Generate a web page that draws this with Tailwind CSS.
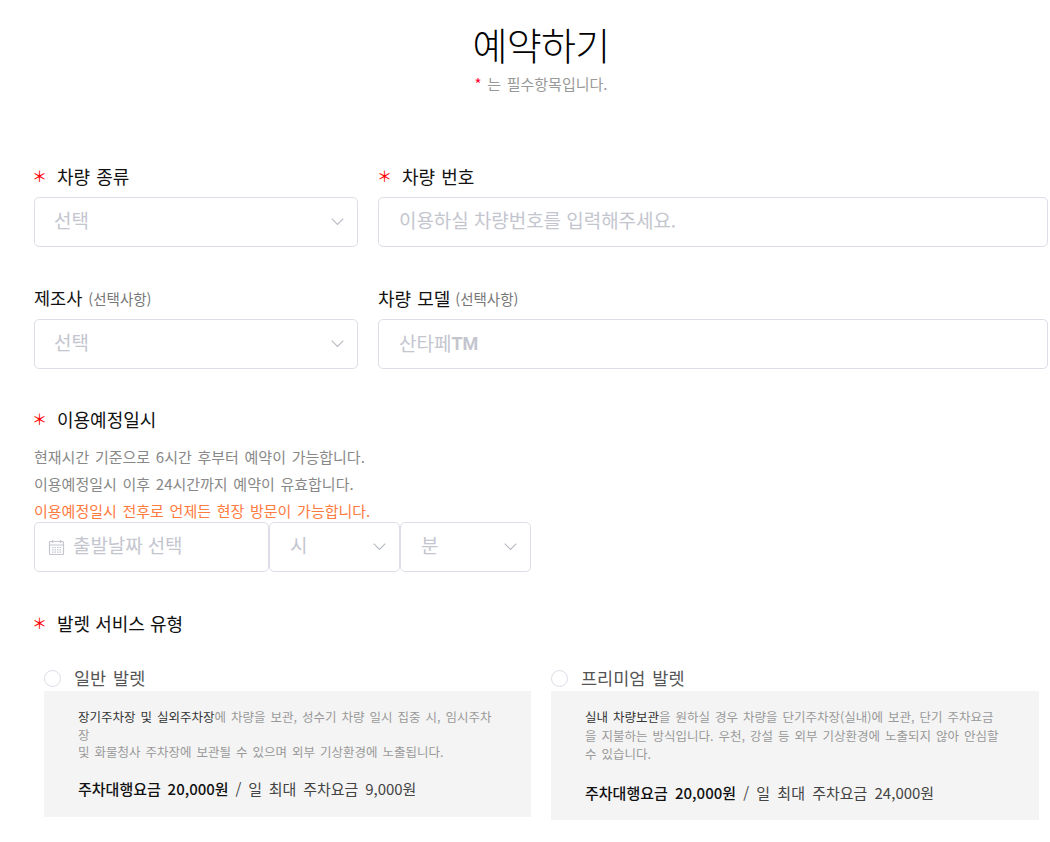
<!DOCTYPE html>
<html lang="ko">
<head>
<meta charset="UTF-8">
<title>예약하기</title>
<script src="https://cdn.jsdelivr.net/npm/@tailwindcss/browser@4"></script>
</head>
<body class="bg-white font-['Noto_Sans_CJK_KR','Noto_Sans',sans-serif] h-[842px] overflow-hidden">
<div class="pl-[34px] pr-[2px]">
  <!-- 제목 -->
  <div class="h-[156px] pt-[19px] text-center">
    <h1 class="text-[38px] leading-[50px] text-black font-light tracking-[-0.7px]">예약하기</h1>
    <p class="mt-[5px] text-[15px] leading-[20px] text-[#999] [word-spacing:1.5px]"><span class="text-[#ff0033]">*</span> 는 필수항목입니다.</p>
  </div>

  <div class="grid grid-cols-[324px_670px] gap-x-[20px]">
    <div>
      <label class="flex items-center h-[41px] text-[18px] text-[#111] [word-spacing:1px]"><span class="text-[#f00] text-[15px] -ml-[2px] w-[25px]">＊</span>차량 종류</label>
      <div class="flex items-center justify-between h-[50px] border border-[#dcdde6] rounded-[5px] pl-[19px] pr-[13px] pb-[4px] text-[19px] text-[#c4c6cf]">선택
        <svg class="w-[13px] h-[8px] mt-[4px]" viewBox="0 0 13 8" fill="none" stroke="#b8bac3" stroke-width="1.1"><path d="M.7.7l5.8 5.8L12.3.7"/></svg>
      </div>
    </div>
    <div>
      <label class="flex items-center h-[41px] text-[18px] text-[#111] [word-spacing:1px]"><span class="text-[#f00] text-[15px] -ml-[1px] w-[25px]">＊</span>차량 번호</label>
      <div class="flex items-center h-[50px] border border-[#dcdde6] rounded-[5px] pl-[20px] pb-[3px] text-[19px] text-[#c4c6cf] tracking-[-0.06px]">이용하실 차량번호를 입력해주세요.</div>
    </div>

    <div class="mt-[31px]">
      <label class="flex items-center h-[41px] text-[17.5px] text-[#111]">제조사<span class="ml-[6px] text-[14.5px] text-[#777]">(선택사항)</span></label>
      <div class="flex items-center justify-between h-[50px] border border-[#dcdde6] rounded-[5px] pl-[19px] pr-[13px] pb-[4px] text-[19px] text-[#c4c6cf]">선택
        <svg class="w-[13px] h-[8px] mt-[4px]" viewBox="0 0 13 8" fill="none" stroke="#b8bac3" stroke-width="1.1"><path d="M.7.7l5.8 5.8L12.3.7"/></svg>
      </div>
    </div>
    <div class="mt-[31px]">
      <label class="flex items-center h-[41px] text-[18px] text-[#111] [word-spacing:1px]">차량 모델<span class="ml-[5px] text-[14.5px] text-[#777]">(선택사항)</span></label>
      <div class="flex items-center h-[50px] border border-[#dcdde6] rounded-[5px] pl-[20px] pb-[1px] text-[19px] text-[#c4c6cf]">산타페<span class="font-['Roboto'] font-bold text-[18px]">TM</span></div>
    </div>
  </div>

  <!-- 이용예정일시 -->
  <div class="mt-[35px] flex items-center h-[30px] text-[18px] text-[#111]"><span class="text-[#f00] text-[15px] -ml-[2px] w-[25px]">＊</span>이용예정일시</div>
  <div class="mt-[9px] text-[15px] leading-[27px] text-[#888] [word-spacing:1.5px]">
    <p>현재시간 기준으로 6시간 후부터 예약이 가능합니다.</p>
    <p>이용예정일시 이후 24시간까지 예약이 유효합니다.</p>
    <p class="text-[#ff7a3d]">이용예정일시 전후로 언제든 현장 방문이 가능합니다.</p>
  </div>
  <div class="flex h-[50px] -mt-[2px] text-[19px] text-[#c4c6cf]">
    <div class="flex items-center w-[235px] border border-[#dcdde6] rounded-[5px] pl-[13px] pb-[3px] tracking-[-0.1px]">
      <svg class="w-[17px] h-[17px] mr-[8px] mt-[3px]" viewBox="0 0 17 17" fill="none" stroke="#c4c6cf" stroke-width="1.2">
        <rect x="1.5" y="2.5" width="14" height="13" rx="1"/>
        <path d="M1.5 6h14M4.5 1v3M12.5 1v3"/>
        <path d="M4 8.5h9M4 10.8h9M4 13.1h9" stroke-dasharray="1.5 1"/>
      </svg>
      출발날짜 선택
    </div>
    <div class="flex items-center justify-between w-[131px] border border-[#dcdde6] rounded-[5px] pl-[20px] pr-[13px] pb-[3px]">시
      <svg class="w-[13px] h-[8px] mt-[3px]" viewBox="0 0 13 8" fill="none" stroke="#b8bac3" stroke-width="1.1"><path d="M.7.7l5.8 5.8L12.3.7"/></svg>
    </div>
    <div class="flex items-center justify-between w-[131px] border border-[#dcdde6] rounded-[5px] pl-[20px] pr-[13px] pb-[3px]">분
      <svg class="w-[13px] h-[8px] mt-[3px]" viewBox="0 0 13 8" fill="none" stroke="#b8bac3" stroke-width="1.1"><path d="M.7.7l5.8 5.8L12.3.7"/></svg>
    </div>
  </div>

  <!-- 발렛 서비스 유형 -->
  <div class="mt-[36px] flex items-center h-[30px] text-[18px] text-[#111]"><span class="text-[#f00] text-[15px] -ml-[2px] w-[25px]">＊</span>발렛 서비스 유형</div>
  <div class="mt-[28px] ml-[10px] grid grid-cols-[487px_488px] gap-x-[20px] items-start">
    <div>
      <div class="flex items-center h-[25px]">
        <span class="w-[17px] h-[17px] rounded-full border border-[#dcdde6]"></span>
        <span class="ml-[13px] text-[17.5px] text-[#555] [word-spacing:2px]">일반 발렛</span>
      </div>
      <div class="h-[126px] bg-[#f4f4f4] pl-[34px] pr-[36px] pt-[17px]">
        <p class="text-[12.5px] leading-[17.5px] text-[#999] [word-spacing:1.5px] break-all"><span class="text-[#333]">장기주차장 및 실외주차장</span>에 차량을 보관, 성수기 차량 일시 집중 시, 임시주차장<br>및 화물청사 주차장에 보관될 수 있으며 외부 기상환경에 노출됩니다.</p>
        <p class="mt-[18px] text-[15px] leading-[20px] text-[#444] [word-spacing:2.6px]"><span class="text-[#111] font-medium">주차대행요금 20,000원</span> / 일 최대 주차요금 9,000원</p>
      </div>
    </div>
    <div>
      <div class="flex items-center h-[25px]">
        <span class="w-[17px] h-[17px] rounded-full border border-[#dcdde6]"></span>
        <span class="ml-[13px] text-[17.5px] text-[#555] [word-spacing:2px]">프리미엄 발렛</span>
      </div>
      <div class="h-[129px] bg-[#f4f4f4] pl-[34px] pr-[36px] pt-[17px]">
        <p class="text-[12.5px] leading-[18.5px] text-[#999] [word-spacing:1.5px] break-all"><span class="text-[#333]">실내 차량보관</span>을 원하실 경우 차량을 단기주차장(실내)에 보관, 단기 주차요금을 지불하는 방식입니다. 우천, 강설 등 외부 기상환경에 노출되지 않아 안심할 수 있습니다.</p>
        <p class="mt-[19px] text-[15px] leading-[20px] text-[#444] [word-spacing:3px]"><span class="text-[#111] font-medium">주차대행요금 20,000원</span> / 일 최대 주차요금 24,000원</p>
      </div>
    </div>
  </div>
</div>
</body>
</html>
